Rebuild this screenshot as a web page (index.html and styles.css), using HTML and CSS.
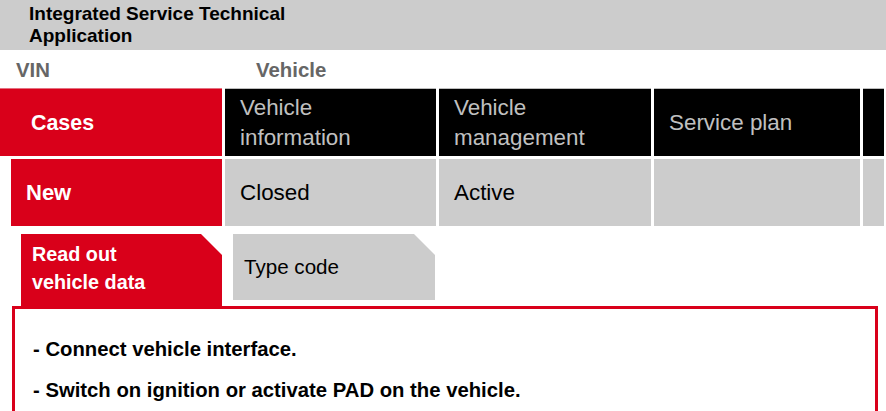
FILE: index.html
```html
<!DOCTYPE html>
<html>
<head>
<meta charset="utf-8">
<link rel="stylesheet" href="styles.css">
</head>
<body>
<div class="app">
  <header class="topbar">
    <div class="title">Integrated Service Technical<br>Application</div>
  </header>
  <div class="crumbs">
    <span class="crumb vin">VIN</span>
    <span class="crumb">Vehicle</span>
  </div>
  <nav class="tabs main-tabs">
    <div class="tab red">Cases</div>
    <div class="tab dark">Vehicle<br>information</div>
    <div class="tab dark">Vehicle<br>management</div>
    <div class="tab dark">Service plan</div>
    <div class="tab dark"></div>
  </nav>
  <nav class="tabs sub-tabs">
    <div class="tab red indent">New</div>
    <div class="tab light">Closed</div>
    <div class="tab light">Active</div>
    <div class="tab light"></div>
    <div class="tab light"></div>
  </nav>
  <div class="steps">
    <div class="step active">Read out<br>vehicle data</div>
    <div class="step">Type code</div>
  </div>
  <section class="panel">
    <p>- Connect vehicle interface.</p>
    <p>- Switch on ignition or activate PAD on the vehicle.</p>
  </section>
</div>
</body>
</html>
```
FILE: styles.css
```css
html, body {
  margin: 0;
  padding: 0;
  background: #fff;
  overflow: hidden;
}
body {
  font-family: "Liberation Sans", Arial, sans-serif;
  width: 886px;
  height: 411px;
}
.topbar {
  background: #cccccc;
  height: 50px;
  box-sizing: border-box;
  padding: 3px 0 0 29px;
}
.title {
  font-weight: bold;
  font-size: 19px;
  line-height: 22px;
  color: #000;
}
.crumbs {
  height: 38px;
  display: flex;
  align-items: center;
  padding: 2px 0 0 16px;
  box-sizing: border-box;
}
.crumb {
  font-weight: bold;
  font-size: 20.4px;
  color: #666666;
}
.crumb.vin {
  width: 240px;
}
.tabs {
  display: grid;
  grid-template-columns: 222px 211px 212px 206px 21px;
  column-gap: 3px;
}
.main-tabs {
  height: 68px;
}
.sub-tabs {
  height: 67px;
  margin-top: 3px;
}
.tab {
  display: flex;
  align-items: center;
  padding-left: 15px;
  font-size: 22.4px;
  line-height: 30px;
  box-sizing: border-box;
}
.tab.red {
  background: #d9001a;
  color: #fff;
  font-weight: bold;
  font-size: 21.4px;
}
.main-tabs .tab.red {
  padding-left: 31px;
  border-top: 1px solid #e47080;
}
.tab.dark {
  background: #000;
  color: #c0c0c0;
  border-top: 1px solid #bdbdbd;
}
.tab.light {
  background: #cccccc;
  color: #000;
}
.tab.indent {
  margin-left: 11px;
  font-size: 22px;
}
.steps {
  display: flex;
  align-items: flex-start;
  margin-top: 8px;
  height: 72px;
  padding-left: 21px;
}
.step {
  box-sizing: border-box;
  height: 66px;
  width: 202px;
  margin-left: 11px;
  background: #cccccc;
  color: #000;
  font-size: 20.6px;
  line-height: 28px;
  display: flex;
  align-items: center;
  padding: 0 0 0 11px;
  clip-path: polygon(0 0, calc(100% - 21px) 0, 100% 21px, 100% 100%, 0 100%);
}
.step.active {
  margin-left: 0;
  width: 201px;
  height: 72px;
  background: #d9001a;
  color: #fff;
  font-weight: bold;
  font-size: 19.8px;
  padding-bottom: 4px;
}
.panel {
  margin: 0 8px 0 12px;
  border: 3px solid #d9001a;
  border-bottom-width: 0;
  height: 105px;
  box-sizing: border-box;
  padding: 28px 0 0 18px;
}
.panel p {
  margin: 0 0 16px 0;
  font-weight: bold;
  font-size: 20.3px;
  line-height: 25px;
  color: #000;
}
```
